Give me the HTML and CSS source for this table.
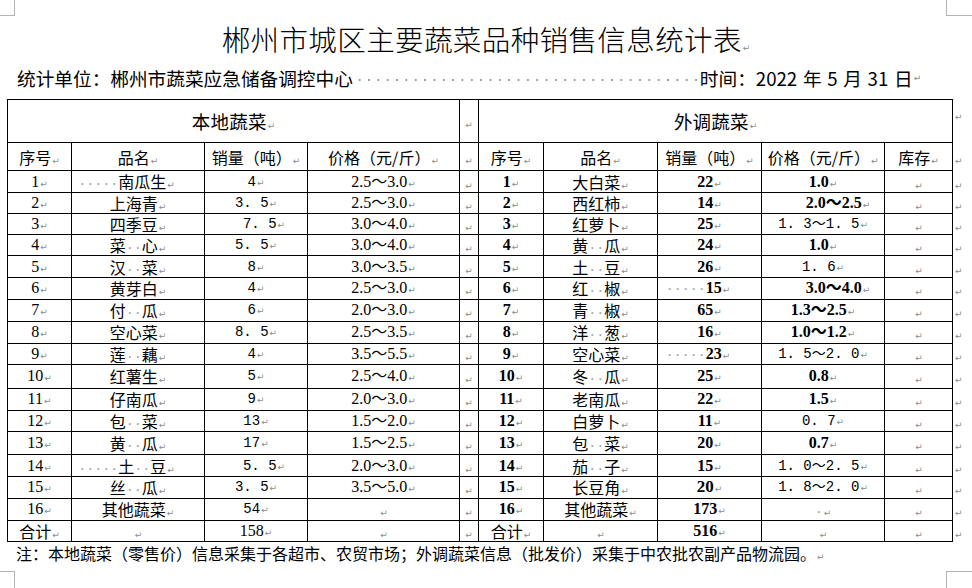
FILE: index.html
```html
<!DOCTYPE html>
<html lang="zh-CN">
<head>
<meta charset="utf-8">
<title>郴州市城区主要蔬菜品种销售信息统计表</title>
<link rel="stylesheet" href="styles.css">
</head>
<body>
<div class="page">
  <div class="crop tl"></div>
  <div class="crop tr"></div>
  <div class="crop bl"></div>
  <div class="crop br"></div>

  <h1 class="title">郴州市城区主要蔬菜品种销售信息统计表<span class="pm">↵</span></h1>
  <div class="meta"><span>统计单位：郴州市蔬菜应急储备调控中心</span><span class="dots"></span><span class="date">时间：2022 年 5 月 31 日</span><span class="pm">↵</span></div>

  <table class="tbl">
    <colgroup>
      <col class="w64"><col class="w133"><col class="w103"><col class="w152"><col class="w19">
      <col class="w65"><col class="w114"><col class="w104"><col class="w123"><col class="w68"><col class="w20">
    </colgroup>
    <tr class="r41">
      <td colspan="4" class="grp">本地蔬菜<span class="pm">↵</span></td>
      <td class="gap"><span class="pm">↵</span></td>
      <td colspan="5" class="grp">外调蔬菜<span class="pm">↵</span></td>
      <td class="eor top"><span class="pm">↵</span></td>
    </tr>
    <tr class="r28">
      <td>序号<span class="pm">↵</span></td><td>品名<span class="pm">↵</span></td><td>销量（吨）<span class="pm">↵</span></td><td>价格（元/斤）<span class="pm">↵</span></td>
      <td class="gap"><span class="pm">↵</span></td>
      <td>序号<span class="pm">↵</span></td><td>品名<span class="pm">↵</span></td><td>销量（吨）<span class="pm">↵</span></td><td>价格（元/斤）<span class="pm">↵</span></td><td>库存<span class="pm">↵</span></td>
      <td class="eor"><span class="pm">↵</span></td>
    </tr>
    <tr class="r22">
      <td class="n">1<span class="pm">↵</span></td><td class="lft"><span class="sp">·····</span>南瓜生<span class="pm">↵</span></td><td class="m">4<span class="pm">↵</span></td><td class="n">2.5～3.0<span class="pm">↵</span></td>
      <td class="gap"><span class="pm">↵</span></td>
      <td class="b">1<span class="pm">↵</span></td><td>大白菜<span class="pm">↵</span></td><td class="b">22<span class="pm">↵</span></td><td class="b">1.0<span class="pm">↵</span></td><td><span class="pm">↵</span></td>
      <td class="eor"><span class="pm">↵</span></td>
    </tr>
    <tr class="r21">
      <td class="n">2<span class="pm">↵</span></td><td>上海青<span class="pm">↵</span></td><td class="m">3. 5<span class="pm">↵</span></td><td class="n">2.5～3.0<span class="pm">↵</span></td>
      <td class="gap"><span class="pm">↵</span></td>
      <td class="b">2<span class="pm">↵</span></td><td>西红柿<span class="pm">↵</span></td><td class="b">14<span class="pm">↵</span></td><td class="b rgt">2.0～2.5<span class="pm">↵</span></td><td><span class="pm">↵</span></td>
      <td class="eor"><span class="pm">↵</span></td>
    </tr>
    <tr class="r21">
      <td class="n">3<span class="pm">↵</span></td><td>四季豆<span class="pm">↵</span></td><td class="m rgt2">7. 5<span class="pm">↵</span></td><td class="n">3.0～4.0<span class="pm">↵</span></td>
      <td class="gap"><span class="pm">↵</span></td>
      <td class="b">3<span class="pm">↵</span></td><td>红萝卜<span class="pm">↵</span></td><td class="b">25<span class="pm">↵</span></td><td class="m">1. 3～1. 5<span class="pm">↵</span></td><td><span class="pm">↵</span></td>
      <td class="eor"><span class="pm">↵</span></td>
    </tr>
    <tr class="r21">
      <td class="n">4<span class="pm">↵</span></td><td>菜<span class="sp">··</span>心<span class="pm">↵</span></td><td class="m">5. 5<span class="pm">↵</span></td><td class="n">3.0～4.0<span class="pm">↵</span></td>
      <td class="gap"><span class="pm">↵</span></td>
      <td class="b">4<span class="pm">↵</span></td><td>黄<span class="sp">··</span>瓜<span class="pm">↵</span></td><td class="b">24<span class="pm">↵</span></td><td class="b">1.0<span class="pm">↵</span></td><td><span class="pm">↵</span></td>
      <td class="eor"><span class="pm">↵</span></td>
    </tr>
    <tr class="r22">
      <td class="n">5<span class="pm">↵</span></td><td>汉<span class="sp">··</span>菜<span class="pm">↵</span></td><td class="m">8<span class="pm">↵</span></td><td class="n">3.0～3.5<span class="pm">↵</span></td>
      <td class="gap"><span class="pm">↵</span></td>
      <td class="b">5<span class="pm">↵</span></td><td>土<span class="sp">··</span>豆<span class="pm">↵</span></td><td class="b">26<span class="pm">↵</span></td><td class="m">1. 6<span class="pm">↵</span></td><td><span class="pm">↵</span></td>
      <td class="eor"><span class="pm">↵</span></td>
    </tr>
    <tr class="r21">
      <td class="n">6<span class="pm">↵</span></td><td>黄芽白<span class="pm">↵</span></td><td class="m">4<span class="pm">↵</span></td><td class="n">2.5～3.0<span class="pm">↵</span></td>
      <td class="gap"><span class="pm">↵</span></td>
      <td class="b">6<span class="pm">↵</span></td><td>红<span class="sp">··</span>椒<span class="pm">↵</span></td><td class="b lft"><span class="sp">·····</span>15<span class="pm">↵</span></td><td class="b rgt">3.0～4.0<span class="pm">↵</span></td><td><span class="pm">↵</span></td>
      <td class="eor"><span class="pm">↵</span></td>
    </tr>
    <tr class="r22">
      <td class="n">7<span class="pm">↵</span></td><td>付<span class="sp">··</span>瓜<span class="pm">↵</span></td><td class="m">6<span class="pm">↵</span></td><td class="n">2.0～3.0<span class="pm">↵</span></td>
      <td class="gap"><span class="pm">↵</span></td>
      <td class="b">7<span class="pm">↵</span></td><td>青<span class="sp">··</span>椒<span class="pm">↵</span></td><td class="b">65<span class="pm">↵</span></td><td class="b">1.3～2.5<span class="pm">↵</span></td><td><span class="pm">↵</span></td>
      <td class="eor"><span class="pm">↵</span></td>
    </tr>
    <tr class="r22">
      <td class="n">8<span class="pm">↵</span></td><td>空心菜<span class="pm">↵</span></td><td class="m">8. 5<span class="pm">↵</span></td><td class="n">2.5～3.5<span class="pm">↵</span></td>
      <td class="gap"><span class="pm">↵</span></td>
      <td class="b">8<span class="pm">↵</span></td><td>洋<span class="sp">··</span>葱<span class="pm">↵</span></td><td class="b">16<span class="pm">↵</span></td><td class="b">1.0～1.2<span class="pm">↵</span></td><td><span class="pm">↵</span></td>
      <td class="eor"><span class="pm">↵</span></td>
    </tr>
    <tr class="r21">
      <td class="n">9<span class="pm">↵</span></td><td>莲<span class="sp">··</span>藕<span class="pm">↵</span></td><td class="m">4<span class="pm">↵</span></td><td class="n">3.5～5.5<span class="pm">↵</span></td>
      <td class="gap"><span class="pm">↵</span></td>
      <td class="b">9<span class="pm">↵</span></td><td>空心菜<span class="pm">↵</span></td><td class="b lft"><span class="sp">·····</span>23<span class="pm">↵</span></td><td class="m">1. 5～2. 0<span class="pm">↵</span></td><td><span class="pm">↵</span></td>
      <td class="eor"><span class="pm">↵</span></td>
    </tr>
    <tr class="r24">
      <td class="n">10<span class="pm">↵</span></td><td>红薯生<span class="pm">↵</span></td><td class="m">5<span class="pm">↵</span></td><td class="n">2.5～4.0<span class="pm">↵</span></td>
      <td class="gap"><span class="pm">↵</span></td>
      <td class="b">10<span class="pm">↵</span></td><td>冬<span class="sp">··</span>瓜<span class="pm">↵</span></td><td class="b">25<span class="pm">↵</span></td><td class="b">0.8<span class="pm">↵</span></td><td><span class="pm">↵</span></td>
      <td class="eor"><span class="pm">↵</span></td>
    </tr>
    <tr class="r22">
      <td class="n">11<span class="pm">↵</span></td><td>仔南瓜<span class="pm">↵</span></td><td class="m">9<span class="pm">↵</span></td><td class="n">2.0～3.0<span class="pm">↵</span></td>
      <td class="gap"><span class="pm">↵</span></td>
      <td class="b">11<span class="pm">↵</span></td><td>老南瓜<span class="pm">↵</span></td><td class="b">22<span class="pm">↵</span></td><td class="b">1.5<span class="pm">↵</span></td><td><span class="pm">↵</span></td>
      <td class="eor"><span class="pm">↵</span></td>
    </tr>
    <tr class="r21">
      <td class="n">12<span class="pm">↵</span></td><td>包<span class="sp">··</span>菜<span class="pm">↵</span></td><td class="m">13<span class="pm">↵</span></td><td class="n">1.5～2.0<span class="pm">↵</span></td>
      <td class="gap"><span class="pm">↵</span></td>
      <td class="b">12<span class="pm">↵</span></td><td>白萝卜<span class="pm">↵</span></td><td class="b">11<span class="pm">↵</span></td><td class="m">0. 7<span class="pm">↵</span></td><td><span class="pm">↵</span></td>
      <td class="eor"><span class="pm">↵</span></td>
    </tr>
    <tr class="r23">
      <td class="n">13<span class="pm">↵</span></td><td>黄<span class="sp">··</span>瓜<span class="pm">↵</span></td><td class="m">17<span class="pm">↵</span></td><td class="n">1.5～2.5<span class="pm">↵</span></td>
      <td class="gap"><span class="pm">↵</span></td>
      <td class="b">13<span class="pm">↵</span></td><td>包<span class="sp">··</span>菜<span class="pm">↵</span></td><td class="b">20<span class="pm">↵</span></td><td class="b">0.7<span class="pm">↵</span></td><td><span class="pm">↵</span></td>
      <td class="eor"><span class="pm">↵</span></td>
    </tr>
    <tr class="r22">
      <td class="n">14<span class="pm">↵</span></td><td class="lft"><span class="sp">·····</span>土<span class="sp">··</span>豆<span class="pm">↵</span></td><td class="m rgt2">5. 5<span class="pm">↵</span></td><td class="n">2.0～3.0<span class="pm">↵</span></td>
      <td class="gap"><span class="pm">↵</span></td>
      <td class="b">14<span class="pm">↵</span></td><td>茄<span class="sp">··</span>子<span class="pm">↵</span></td><td class="b">15<span class="pm">↵</span></td><td class="m">1. 0～2. 5<span class="pm">↵</span></td><td><span class="pm">↵</span></td>
      <td class="eor"><span class="pm">↵</span></td>
    </tr>
    <tr class="r21">
      <td class="n">15<span class="pm">↵</span></td><td>丝<span class="sp">··</span>瓜<span class="pm">↵</span></td><td class="m">3. 5<span class="pm">↵</span></td><td class="n">3.5～5.0<span class="pm">↵</span></td>
      <td class="gap"><span class="pm">↵</span></td>
      <td class="b">15<span class="pm">↵</span></td><td>长豆角<span class="pm">↵</span></td><td class="bb">20<span class="pm">↵</span></td><td class="m">1. 8～2. 0<span class="pm">↵</span></td><td><span class="pm">↵</span></td>
      <td class="eor"><span class="pm">↵</span></td>
    </tr>
    <tr class="r22">
      <td class="n">16<span class="pm">↵</span></td><td>其他蔬菜<span class="pm">↵</span></td><td class="m">54<span class="pm">↵</span></td><td><span class="pm">↵</span></td>
      <td class="gap"><span class="pm">↵</span></td>
      <td class="b">16<span class="pm">↵</span></td><td>其他蔬菜<span class="pm">↵</span></td><td class="b">173<span class="pm">↵</span></td><td><span class="sp">·</span><span class="pm">↵</span></td><td><span class="pm">↵</span></td>
      <td class="eor"><span class="pm">↵</span></td>
    </tr>
    <tr class="r21">
      <td>合计<span class="pm">↵</span></td><td><span class="pm">↵</span></td><td class="n">158<span class="pm">↵</span></td><td><span class="pm">↵</span></td>
      <td class="gap"><span class="pm">↵</span></td>
      <td>合计<span class="pm">↵</span></td><td><span class="pm">↵</span></td><td class="b">516<span class="pm">↵</span></td><td><span class="pm">↵</span></td><td><span class="pm">↵</span></td>
      <td class="eor"><span class="pm">↵</span></td>
    </tr>
  </table>

  <p class="note">注：本地蔬菜（零售价）信息采集于各超市、农贸市场；外调蔬菜信息（批发价）采集于中农批农副产品物流园。<span class="pm">↵</span></p>
</div>
</body>
</html>
```

FILE: styles.css
```css
html, body {
  margin: 0;
  padding: 0;
  background: #ffffff;
}

body {
  width: 972px;
  height: 588px;
  overflow: hidden;
  font-family: "Noto Sans CJK SC", "Noto Sans", sans-serif;
  color: #000;
}

.page {
  position: relative;
  width: 972px;
  height: 588px;
  padding-top: 20px;
  box-sizing: border-box;
}

/* Word page crop marks */
.crop {
  position: absolute;
  border-color: #b4b4b4;
  border-style: solid;
  border-width: 0;
}
.crop.tl { left: 0; top: 0; width: 14px; height: 15px; border-right-width: 1px; border-bottom-width: 1px; }
.crop.tr { left: 946px; top: 0; width: 26px; height: 15px; border-left-width: 1px; border-bottom-width: 1px; }
.crop.bl { left: 0; top: 571px; width: 14px; height: 17px; border-right-width: 1px; border-top-width: 1px; }
.crop.br { left: 946px; top: 571px; width: 26px; height: 17px; border-left-width: 1px; border-top-width: 1px; }

.pm {
  font-family: "DejaVu Sans", sans-serif;
  font-size: 9px;
  line-height: 1;
  font-weight: normal;
  color: #8c8c8c;
  letter-spacing: 0;
  word-spacing: 0;
  margin-left: 1px;
}

.sp {
  font-family: "Liberation Mono", monospace;
  font-size: 13.33px;
  line-height: 1;
  font-weight: normal;
  color: #a0a0a0;
}

.title {
  margin: 0;
  height: 38px;
  line-height: 38px;
  font-size: 28.5px;
  font-weight: 300;
  letter-spacing: 0.4px;
  text-align: center;
}

.meta {
  display: flex;
  align-items: center;
  margin-top: 8px;
  height: 24px;
  line-height: 24px;
  padding-left: 17px;
  font-size: 18.67px;
  white-space: nowrap;
}

.meta .date {
  word-spacing: 1.5px;
}

.meta .dots {
  display: inline-block;
  width: 347px;
  height: 24px;
  background-image: radial-gradient(circle, #9a9a9a 0.9px, transparent 1.2px);
  background-size: 9.35px 4px;
  background-repeat: repeat-x;
  background-position: 2px 12px;
}

.tbl {
  margin-top: 9px;
  margin-left: 7px;
  border-collapse: collapse;
  table-layout: fixed;
  width: 966px;
  font-size: 16px;
}

.w64 { width: 64px; }
.w133 { width: 133px; }
.w103 { width: 103px; }
.w152 { width: 152px; }
.w19 { width: 19px; }
.w65 { width: 65px; }
.w114 { width: 114px; }
.w104 { width: 104px; }
.w123 { width: 123px; }
.w68 { width: 68px; }
.w20 { width: 20px; }

.tbl td {
  border: 1px solid #000;
  padding: 0;
  text-align: center;
  vertical-align: middle;
  line-height: 20px;
  white-space: nowrap;
}

.r21 td { height: 20px; }
.r22 td { height: 21px; }
.r23 td { height: 22px; }
.r24 td { height: 23px; }
.r28 td { height: 27px; }
.r41 td { height: 40px; }

.tbl td.grp {
  font-size: 18.5px;
  letter-spacing: 0.2px;
}

.tbl td.gap {
  padding: 0;
}
.tbl td.gap .pm { margin-left: 0; }

.tbl td.eor {
  border: none;
  text-align: left;
  padding-left: 2px;
}
.tbl td.eor.top {
  vertical-align: top;
  padding-top: 3px;
}
.tbl td.eor .pm { margin-left: 0; }

.tbl td.n {
  font-family: "Liberation Serif", "Noto Sans CJK SC", serif;
}
.tbl td.b {
  font-family: "Liberation Serif", "Noto Sans CJK SC", serif;
  font-weight: 700;
}
.tbl td.bb {
  font-family: "Liberation Serif", serif;
  font-weight: 900;
  font-size: 17px;
}
.tbl td.m {
  font-family: "Liberation Mono", "Noto Sans CJK SC", monospace;
  font-size: 14px;
}

.tbl td.lft { padding-right: 23px; }
.tbl td.rgt { padding-left: 30px; }
.tbl td.rgt2 { padding-left: 16px; }

.note {
  margin: 0;
  padding-left: 16px;
  font-size: 16px;
  line-height: 22px;
  white-space: nowrap;
}
```
